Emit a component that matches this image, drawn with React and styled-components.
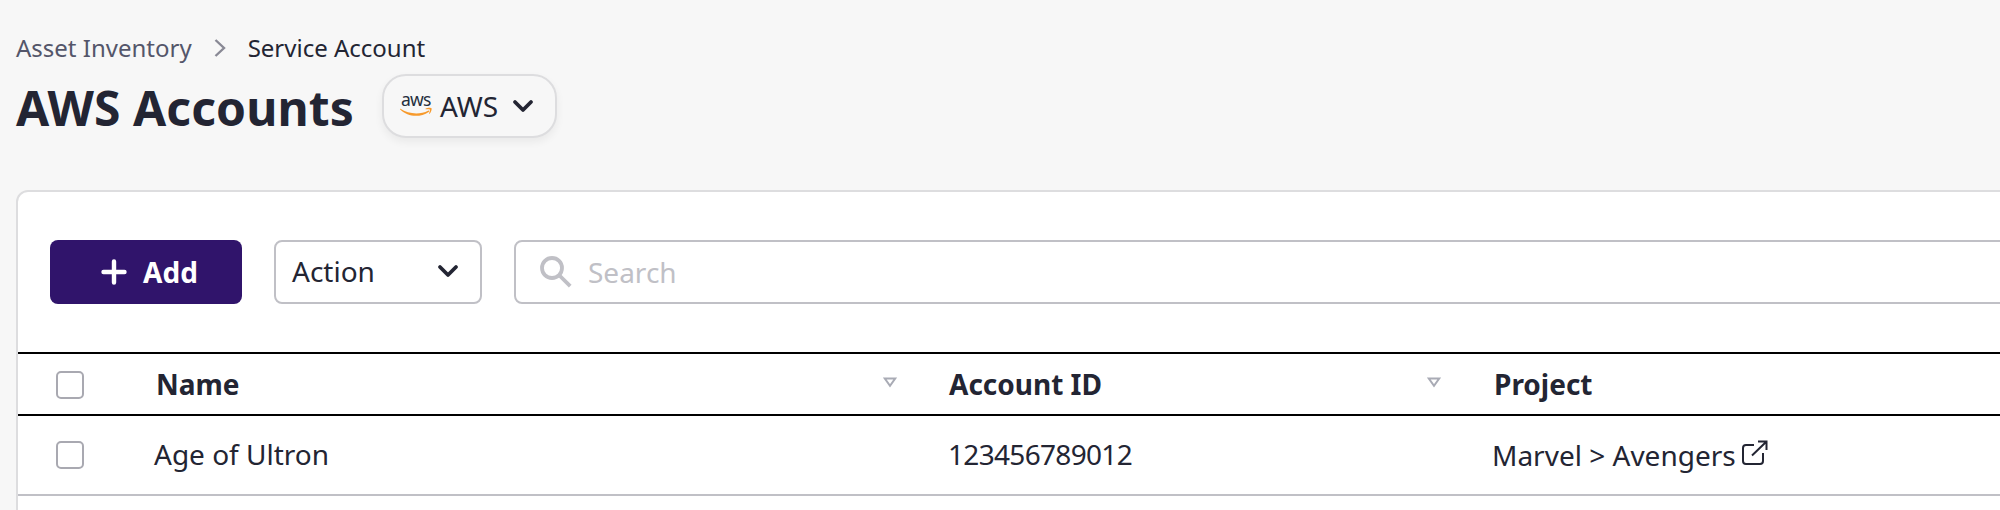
import React from "react";
import styled, { createGlobalStyle } from "styled-components";

const ink = "#232533";
const line = "#c0c0c6";

const GlobalStyle = createGlobalStyle`
  *, *::before, *::after { box-sizing: border-box; }
  html, body { margin: 0; height: 100%; overflow: hidden; }
  body {
    background: #f7f7f7;
    color: ${ink};
    font-family: "Noto Sans", sans-serif;
    font-size: 28px;
    line-height: 38px;
  }
  svg { display: block; flex: none; overflow: visible; }
`;

const Page = styled.main`
  height: 510px;
  padding: 30px 0 0 16px;
  overflow: hidden;
  display: flex;
  flex-direction: column;
`;

const Breadcrumb = styled.nav`
  display: flex;
  align-items: center;
  height: 35px;
  font-size: 24px;
  line-height: 35px;
`;

const Crumb = styled.span`
  color: ${(p) => (p.$current ? ink : "#54566a")};
  white-space: nowrap;
`;

const CrumbSeparator = styled.svg`
  margin: 0 22px;
`;

const TitleBar = styled.header`
  display: flex;
  align-items: center;
  height: 64px;
  margin-top: 9px;
`;

const Title = styled.h1`
  margin: 0;
  width: 366px;
  padding-top: 3px;
  font-size: 48px;
  line-height: 66px;
  font-weight: 700;
  letter-spacing: 0.1px;
  white-space: nowrap;
`;

const ProviderButton = styled.button`
  display: flex;
  align-items: center;
  width: 175px;
  height: 64px;
  padding: 0 0 0 16px;
  border: 2px solid #dddddf;
  border-radius: 24px;
  background: #f7f7f7;
  box-shadow: 0 4px 8px rgba(0, 0, 0, 0.06);
  color: inherit;
  font: inherit;
`;

const ProviderName = styled.span`
  width: 72px;
  margin-left: 8px;
  text-align: left;
`;

const Panel = styled.section`
  flex: none;
  width: 2060px;
  height: 360px;
  margin-top: 52px;
  border: 2px solid #dddddf;
  border-radius: 12px;
  background: #fff;
`;

const Toolbar = styled.div`
  display: flex;
  gap: 32px;
  padding: 48px 32px;
`;

const AddButton = styled.button`
  display: flex;
  align-items: center;
  justify-content: center;
  gap: 16px;
  width: 192px;
  height: 64px;
  padding: 0 0 0 7px;
  border: 0;
  border-radius: 8px;
  background: #30146b;
  color: #fff;
  font: inherit;
  font-weight: 700;
`;

const ActionSelect = styled.button`
  display: flex;
  align-items: center;
  justify-content: space-between;
  width: 208px;
  height: 64px;
  padding: 0 21px 2px 16px;
  border: 2px solid ${line};
  border-radius: 8px;
  background: #fff;
  color: inherit;
  font: inherit;
`;

const SearchBox = styled.div`
  display: flex;
  align-items: center;
  gap: 16px;
  flex: 1;
  height: 64px;
  padding-left: 24px;
  border: 2px solid ${line};
  border-radius: 8px;
  color: ${line};
`;

const Row = styled.div`
  display: grid;
  grid-template-columns: 136px 794px 545px 1fr;
  align-items: center;
`;

const HeaderRow = styled(Row)`
  height: 64px;
  border-top: 2px solid #000;
  border-bottom: 2px solid #000;
  font-weight: 700;
`;

const BodyRow = styled(Row)`
  height: 80px;
  border-bottom: 2px solid ${line};
`;

const Checkbox = styled.span`
  display: block;
  width: 28px;
  height: 28px;
  margin: ${(p) => p.$offset || 0}px 0 0 38px;
  border: 2px solid #a9a9b1;
  border-radius: 5px;
  background: #fff;
`;

const HeaderCell = styled.div`
  display: flex;
  align-items: center;
  justify-content: space-between;
  padding: 0 ${(p) => p.$end || 51}px 0 ${(p) => p.$inset || 1}px;
`;

const SortIcon = styled.svg`
  margin-bottom: 4px;
`;

const Cell = styled.div`
  display: flex;
  align-items: center;
  padding-bottom: 2px;
  white-space: nowrap;
  letter-spacing: ${(p) => (p.$numeric ? "-0.68px" : "normal")};
`;

const ProjectCell = styled(Cell)`
  padding: 0;
  margin-left: -1px;
`;

const ExternalIcon = styled.svg`
  margin: 0 0 4px 6px;
`;

const Chevron = () => (
  <svg width="22" height="14" viewBox="0 0 22 14" fill="none" stroke={ink} strokeWidth="3.8" strokeLinecap="round" strokeLinejoin="round">
    <path d="M3 3 L11 11 L19 3" />
  </svg>
);

const SortArrow = () => (
  <SortIcon width="14" height="11" viewBox="0 0 14 11" fill="none" stroke="#a9abb5" strokeWidth="2">
    <path d="M1.8 1.5 H12.2 L7 8.8 Z" />
  </SortIcon>
);

const AwsLogo = () => (
  <svg width="32" height="24" viewBox="0 0 32 24">
    <text x="1" y="12" fontSize="17.5" textLength="30.5" fill="#252f3e">aws</text>
    <path d="M0.5 14.8 C8 20 20 21 28 16.7 C29 16.2 29.6 17.2 28.7 17.9 C20 23.9 7.6 23 0.2 15.5 C-0.2 15 0.1 14.6 0.5 14.8 Z" fill="#f79a2c" />
    <path d="M25.5 14.8 C27.5 13.4 31 13.6 31.5 14.2 C32 15 31.2 18.4 29.5 19.8 C29.2 20 28.9 19.8 29 19.5 C29.5 18.3 30.2 16 29.8 15.5 C29.4 15 27 15.2 25.9 15.3 C25.4 15.3 25.2 15.1 25.5 14.8 Z" fill="#f79a2c" />
  </svg>
);

export default function App() {
  return (
    <>
      <GlobalStyle />
      <Page>
        <Breadcrumb>
          <Crumb>Asset Inventory</Crumb>
          <CrumbSeparator width="12" height="18" viewBox="0 0 12 18" fill="none" stroke="#898995" strokeWidth="2.4">
            <path d="M1.5 1 L10 9 L1.5 17" />
          </CrumbSeparator>
          <Crumb $current>Service Account</Crumb>
        </Breadcrumb>
        <TitleBar>
          <Title>AWS Accounts</Title>
          <ProviderButton>
            <AwsLogo />
            <ProviderName>AWS</ProviderName>
            <Chevron />
          </ProviderButton>
        </TitleBar>
        <Panel>
          <Toolbar>
            <AddButton>
              <svg width="26" height="26" viewBox="0 0 26 26" fill="none" stroke="#fff" strokeWidth="4.4" strokeLinecap="round">
                <path d="M13 2.5 V23.5 M2.5 13 H23.5" />
              </svg>
              Add
            </AddButton>
            <ActionSelect>
              Action
              <Chevron />
            </ActionSelect>
            <SearchBox>
              <svg width="32" height="32" viewBox="0 0 32 32" fill="none" stroke={line} strokeWidth="3.8">
                <circle cx="12" cy="12" r="10" />
                <path d="M20 20 L30.2 30.2" />
              </svg>
              Search
            </SearchBox>
          </Toolbar>
          <HeaderRow>
            <Checkbox $offset={2} />
            <HeaderCell $inset={2}>Name<SortArrow /></HeaderCell>
            <HeaderCell $end={52}>Account ID<SortArrow /></HeaderCell>
            <HeaderCell>Project</HeaderCell>
          </HeaderRow>
          <BodyRow>
            <Checkbox />
            <Cell>Age of Ultron</Cell>
            <Cell $numeric>123456789012</Cell>
            <ProjectCell>
              Marvel &gt; Avengers
              <ExternalIcon width="26" height="26" viewBox="0 0 26 26" fill="none" stroke={ink} strokeWidth="2">
                <path d="M12 5 H4 Q1 5 1 8 V21 Q1 24 4 24 H18 Q21 24 21 21 V13" />
                <path d="M10 15.5 L24 2 M16 1.5 H24.5 V10" />
              </ExternalIcon>
            </ProjectCell>
          </BodyRow>
        </Panel>
      </Page>
    </>
  );
}
